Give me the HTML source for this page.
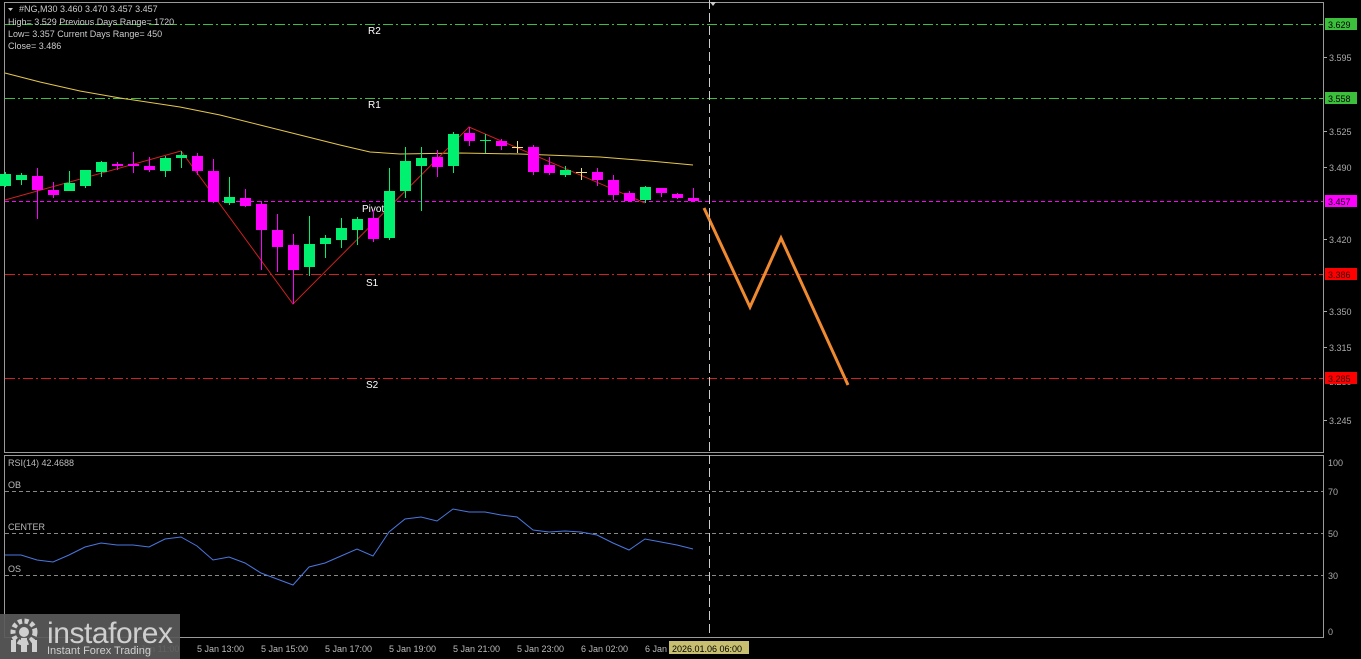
<!DOCTYPE html>
<html><head><meta charset="utf-8"><style>
html,body{margin:0;padding:0;background:#000;width:1361px;height:659px;overflow:hidden}
svg{display:block}
text{font-family:"Liberation Sans",sans-serif}
</style></head><body>
<svg id="s" width="1361" height="659" viewBox="0 0 1361 659" xmlns="http://www.w3.org/2000/svg">
<rect width="1361" height="659" fill="#000"/>
<rect x="4.5" y="2.5" width="1319" height="450" fill="none" stroke="#9a9a9a" stroke-width="1"/>
<rect x="4.5" y="455.5" width="1319" height="182" fill="none" stroke="#9a9a9a" stroke-width="1"/>
<g stroke-width="1" fill="none">
<line x1="5" y1="24.5" x2="1323" y2="24.5" stroke="#3cbf3c" stroke-dasharray="10,3,2,3"/>
<line x1="5" y1="98.5" x2="1323" y2="98.5" stroke="#3cbf3c" stroke-dasharray="10,3,2,3"/>
<line x1="5" y1="201.5" x2="1323" y2="201.5" stroke="#ff00ff" stroke-dasharray="4,3"/>
<line x1="5" y1="274.5" x2="1323" y2="274.5" stroke="#d02020" stroke-dasharray="10,3,2,3"/>
<line x1="5" y1="378.5" x2="1323" y2="378.5" stroke="#d02020" stroke-dasharray="10,3,2,3"/>
<line x1="5" y1="491.5" x2="1323" y2="491.5" stroke="#888" stroke-dasharray="4,3"/>
<line x1="5" y1="533.5" x2="1323" y2="533.5" stroke="#888" stroke-dasharray="4,3"/>
<line x1="5" y1="575.5" x2="1323" y2="575.5" stroke="#888" stroke-dasharray="4,3"/>
</g>
<g fill="#fff" font-size="10">
<text x="368" y="34">R2</text><text x="368" y="108">R1</text><text x="362" y="212">Pivot</text>
<text x="366" y="286">S1</text><text x="366" y="388">S2</text>
</g>
<g fill="#bbb" font-size="9">
<text x="8" y="488">OB</text><text x="8" y="530">CENTER</text><text x="8" y="572">OS</text>
<text x="8" y="466">RSI(14) 42.4688</text>
</g>
<polyline fill="none" stroke="#e6c84a" stroke-width="1" points="5,73 40,82 80,91 120,98 180,107 220,115 260,125 300,135 340,145 370,152 400,154 460,153 520,154 600,157 650,161 693,165"/>
<polyline fill="none" stroke="#d02020" stroke-width="1" points="5,200 181,151 293,304 469,127 645,203"/>
<g id="c"></g>
<polyline fill="none" stroke="#4a78e0" stroke-width="1" points="5,555 21,555 37,560 53,562 69,555 85,547 101,543 117,545 133,545 149,547 165,539 181,537 197,546 213,560 229,557 245,563 261,573 277,579 293,585 309,567 325,563 341,556 357,549 373,556 389,532 405,519 421,517 437,521 453,509 469,512 485,512 501,515 517,517 533,530 549,532 565,531 581,532 597,535 613,543 629,550 645,539 661,542 677,545 693,549"/>
<polyline fill="none" stroke="#f08a30" stroke-width="3" points="704,208 750,307 781,238 848,385"/>
<line x1="709.5" y1="0" x2="709.5" y2="637" stroke="#ccc" stroke-dasharray="9,4"/>
<polygon points="710,2 716,2 713,6" fill="#ccc"/>
<g fill="#ccc" font-size="9">
<polygon points="8,8 13,8 10.5,11" fill="#ccc"/>
<text x="19" y="12">#NG,M30  3.460 3.470 3.457 3.457</text>
<text x="8" y="25">High= 3.529    Previous Days Range= 1720</text>
<text x="8" y="37">Low= 3.357    Current Days Range= 450</text>
<text x="8" y="49">Close= 3.486</text>
</g>
<g font-size="9" fill="#aaa">
<g stroke="#aaa"><line x1="1324" y1="57.5" x2="1327" y2="57.5"/><line x1="1324" y1="131.5" x2="1327" y2="131.5"/><line x1="1324" y1="167.5" x2="1327" y2="167.5"/><line x1="1324" y1="239.5" x2="1327" y2="239.5"/><line x1="1324" y1="311.5" x2="1327" y2="311.5"/><line x1="1324" y1="347.5" x2="1327" y2="347.5"/><line x1="1324" y1="420.5" x2="1327" y2="420.5"/></g>
<text x="1329" y="61">3.595</text><text x="1329" y="135">3.525</text><text x="1329" y="171">3.490</text>
<text x="1329" y="243">3.420</text><text x="1329" y="315">3.350</text><text x="1329" y="351">3.315</text>
<text x="1329" y="385">3.280</text><text x="1329" y="424">3.245</text>
<text x="1328" y="466">100</text><text x="1328" y="495">70</text><text x="1328" y="537">50</text><text x="1328" y="579">30</text><text x="1328" y="635">0</text>
</g>
<rect x="1325" y="18" width="32" height="12" fill="#3cc03c"/><text x="1328" y="28" font-size="9" fill="#000">3.629</text>
<rect x="1325" y="92" width="32" height="12" fill="#3cc03c"/><text x="1328" y="102" font-size="9" fill="#000">3.558</text>
<rect x="1325" y="195" width="32" height="12" fill="#ff00ff"/><text x="1328" y="205" font-size="9" fill="#000">3.457</text>
<rect x="1325" y="268" width="32" height="12" fill="#ff0000"/><text x="1328" y="278" font-size="9" fill="#300">3.386</text>
<rect x="1325" y="372" width="32" height="12" fill="#ff0000"/><text x="1328" y="382" font-size="9" fill="#300">3.285</text>
<g font-size="9" fill="#bbb">
<text x="133" y="652">5 Jan 11:00</text><text x="197" y="652">5 Jan 13:00</text><text x="261" y="652">5 Jan 15:00</text>
<text x="325" y="652">5 Jan 17:00</text><text x="389" y="652">5 Jan 19:00</text><text x="453" y="652">5 Jan 21:00</text>
<text x="517" y="652">5 Jan 23:00</text><text x="581" y="652">6 Jan 02:00</text><text x="645" y="652">6 Jan</text>
</g>
<rect x="669" y="641" width="80" height="13" fill="#c8c070"/><text x="672" y="652" font-size="9" fill="#000">2026.01.06 06:00</text>
<rect x="0" y="614" width="180" height="45" fill="#5a5a5a" opacity="0.92"/>
<g fill="#cfcfcf">
<circle cx="24" cy="632" r="11" fill="none" stroke="#cfcfcf" stroke-width="5" stroke-dasharray="4,2.5"/>
<circle cx="24" cy="632" r="5"/>
<rect x="11" y="640" width="5" height="12"/><rect x="21" y="638" width="6" height="14"/><rect x="32" y="640" width="5" height="12"/>
</g>
<text x="47" y="643" font-size="30" fill="#cfcfcf" textLength="126">instaforex</text>
<text x="47" y="654" font-size="11" fill="#cfcfcf">Instant Forex Trading</text>
</svg>
<script>
var d=[[5,'g',174,186,172,187],[21,'g',175,180,173,185],[37,'m',176,190,168,219],[53,'m',190,195,182,198],[69,'g',183,191,171,191],[85,'g',170,186,170,188],[101,'g',162,172,161,177],[117,'m',164,166,162,170],[133,'m',164,166,152,173],[149,'m',166,170,157,172],[165,'g',158,171,156,177],[181,'g',155,158,151,168],[197,'m',156,171,153,175],[213,'m',171,202,159,203],[229,'g',197,203,177,205],[245,'m',198,206,189,207],[261,'m',204,230,201,270],[277,'m',230,247,214,272],[293,'m',245,270,234,304],[309,'g',244,267,216,276],[325,'g',238,244,235,258],[341,'g',228,240,218,248],[357,'g',219,230,217,245],[373,'m',218,239,210,242],[389,'g',191,238,168,240],[405,'g',161,191,147,198],[421,'g',158,166,147,211],[437,'m',157,167,150,177],[453,'g',134,166,132,173],[469,'m',133,141,127,146],[485,'g',140,141,134,153],[501,'m',141,146,139,150],[517,'y',147,147,141,153],[533,'m',147,172,145,175],[549,'m',165,173,157,175],[565,'g',170,175,166,177],[581,'y',172,172,168,180],[597,'m',172,180,168,186],[613,'m',180,195,175,200],[629,'m',193,201,191,202],[645,'g',187,200,186,203],[661,'m',188,193,188,197],[677,'m',194,198,193,199],[693,'m',198,201,188,201]];
var col={g:'#00f070',m:'#ff00ff',y:'#f0e080'},h='';
d.forEach(function(c){var x=c[0],k=col[c[1]];
h+='<line x1="'+(x+.5)+'" y1="'+c[4]+'" x2="'+(x+.5)+'" y2="'+c[5]+'" stroke="'+k+'"/>';
var bh=Math.max(1,c[3]-c[2]);h+='<rect x="'+(x-5)+'" y="'+c[2]+'" width="11" height="'+bh+'" fill="'+k+'"/>';});
document.getElementById('c').innerHTML=h;
</script>
</body></html>
